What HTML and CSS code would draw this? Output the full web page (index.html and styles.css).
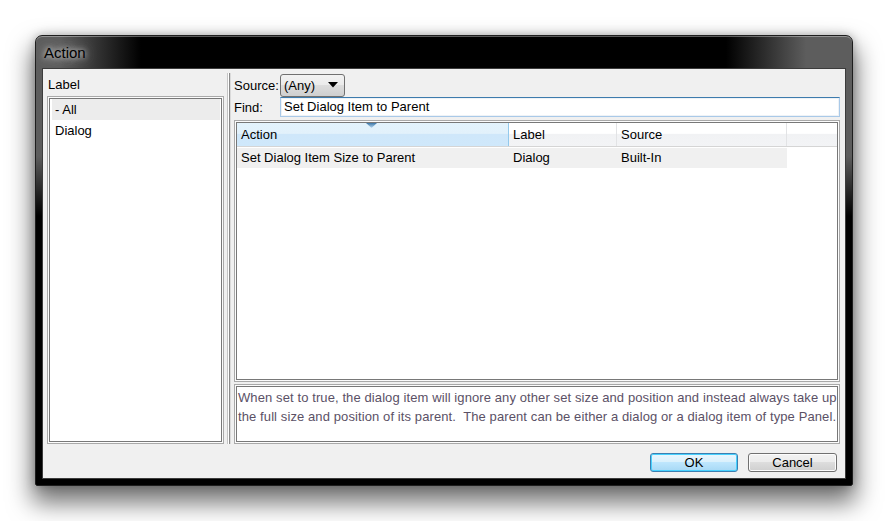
FILE: index.html
```html
<!DOCTYPE html>
<html>
<head>
<meta charset="utf-8">
<link rel="stylesheet" href="styles.css">
</head>
<body>
<div class="stage">
  <div class="window">
    <div class="titlebar"><span class="title">Action</span></div>
    <div class="content">
      <div class="main">
        <div class="left">
          <div class="head">Label</div>
          <div class="sunken list">
            <div class="inner">
              <div class="item sel">- All</div>
              <div class="item">Dialog</div>
            </div>
          </div>
        </div>
        <div class="splitter"></div>
        <div class="right">
          <div class="row row-source">
            <span class="lbl">Source:</span>
            <div class="combo"><span>(Any)</span>
              <svg class="arrow" width="10" height="6" viewBox="0 0 10 6"><path d="M0 0H10L5 5.5Z" fill="#000"/></svg>
            </div>
          </div>
          <div class="row row-find">
            <span class="lbl">Find:</span>
            <div class="input">Set Dialog Item to Parent</div>
          </div>
          <div class="sunken grid">
            <div class="inner">
              <div class="thead">
                <div class="th c1 sorted">Action
                  <svg class="sort" width="11" height="5" viewBox="0 0 11 5"><defs><linearGradient id="sg" x1="0" y1="0" x2="0" y2="1"><stop offset="0" stop-color="#3d78a9"/><stop offset="1" stop-color="#b9d9f2"/></linearGradient></defs><path d="M0 0H11L5.5 5Z" fill="url(#sg)"/></svg>
                </div>
                <div class="th c2">Label</div>
                <div class="th c3">Source</div>
                <div class="th c4"></div>
              </div>
              <div class="tr">
                <div class="td c1">Set Dialog Item Size to Parent</div>
                <div class="td c2">Dialog</div>
                <div class="td c3">Built-In</div>
              </div>
            </div>
          </div>
          <div class="sunken desc">
            <div class="inner">When set to true, the dialog item will ignore any other set size and position and instead always take up<br>the full size and position of its parent.&nbsp; The parent can be either a dialog or a dialog item of type Panel.</div>
          </div>
        </div>
      </div>
      <div class="footer">
        <div class="btn ok">OK</div>
        <div class="btn">Cancel</div>
      </div>
    </div>
  </div>
</div>
</body>
</html>
```
FILE: styles.css
```css
html, body {
  margin: 0;
  background: #fff;
}
body {
  font-family: "Liberation Sans", Arial, sans-serif;
  font-size: 13px;
  color: #000;
  height: 521px;
}
.stage {
  padding: 35px 0 0 35px;
}
.window {
  width: 818px;
  height: 451px;
  box-sizing: border-box;
  padding: 0 7px 7px 7px;
  border: 1px solid #1e1e1e;
  border-radius: 7px 7px 2px 2px;
  background:
    linear-gradient(to bottom, rgba(0,0,0,0) 0, rgba(0,0,0,0) 120px, #000 180px),
    linear-gradient(to right, #5d5d5d 0, #5d5d5d 25px, #000 105px, #000 690px, #5d5d5d 770px, #5d5d5d 100%);
  box-shadow: 0 14px 24px 3px rgba(0,0,0,0.55), 0 0 10px rgba(0,0,0,0.25), inset 0 1px 0 rgba(255,255,255,0.35);
  display: flex;
  flex-direction: column;
}
.titlebar {
  height: 33px;
  line-height: 33px;
  margin-left: -7px;
}
.title {
  display: inline-block;
  padding-left: 8px;
  font-size: 15px;
  color: #000;
  text-shadow: 0 0 5px rgba(210,210,210,1), 0 0 10px rgba(190,190,190,0.9), 0 0 16px rgba(170,170,170,0.8);
}
.content {
  height: 409px;
  box-sizing: border-box;
  background: #f0f0f0;
  padding: 4px 5px 0 4px;
  box-shadow: 0 0 0 1px #3c3c3c;
  display: flex;
  flex-direction: column;
}
.main {
  height: 371px;
  display: flex;
}
.left {
  width: 177px;
  flex: none;
  display: flex;
  flex-direction: column;
}
.head {
  height: 23px;
  line-height: 23px;
  padding-left: 1px;
}
.sunken {
  box-sizing: border-box;
  border: 1px solid #a9a9a9;
  padding: 1px;
  background: #fcfcfc;
}
.sunken > .inner {
  box-sizing: border-box;
  height: 100%;
  border: 1px solid #787878;
  background: #fff;
}
.list {
  height: 348px;
}
.list .inner {
  padding: 0 1px 0 2px;
}
.item {
  height: 21px;
  line-height: 21px;
  padding-left: 3px;
}
.item.sel {
  background: #ececec;
}
.splitter {
  width: 9px;
  flex: none;
  background: linear-gradient(to right, transparent 3px, #c4c4c4 3px, #c4c4c4 4px, #fff 4px, #fff 5px, #8a8a8a 5px, #8a8a8a 6px, #dadada 6px, #dadada 7px, transparent 7px);
}
.right {
  width: 607px;
  flex: none;
  padding-left: 1px;
  box-sizing: border-box;
  display: flex;
  flex-direction: column;
}
.row {
  display: flex;
  align-items: center;
}
.lbl {
  width: 46px;
  flex: none;
}
.row-source {
  height: 24px;
}
.combo {
  box-sizing: border-box;
  width: 65px;
  height: 23px;
  border: 1px solid #707070;
  border-radius: 3px;
  background: linear-gradient(to bottom, #f2f2f2 0, #ebebeb 50%, #dddddd 50%, #cfcfcf 100%);
  display: flex;
  align-items: center;
  padding-left: 3px;
}
.combo .arrow {
  margin-left: 13px;
}
.row-find {
  height: 23px;
  align-items: flex-start;
}
.row-find .lbl {
  line-height: 22px;
}
.input {
  box-sizing: border-box;
  flex: 1;
  height: 20px;
  line-height: 18px;
  border: 1px solid #a9c9e8;
  border-top-color: #3d7bad;
  padding-left: 3px;
  background: #fff;
  box-shadow: inset 0 0 0 1px #eef2f6;
}
.grid {
  height: 262px;
}
.thead {
  height: 23px;
  display: flex;
  border-bottom: 1px solid #d5d5d5;
  background: linear-gradient(to bottom, #ffffff 0, #ffffff 45%, #f1f2f4 50%, #f3f4f6 100%);
}
.th {
  box-sizing: border-box;
  line-height: 23px;
  padding-left: 4px;
  border-right: 1px solid #e2e3e5;
  position: relative;
}
.th.sorted {
  background: linear-gradient(to bottom, #e3f3fc 0, #e2f1fb 45%, #cfe7fa 50%, #cfe8fb 100%);
  border-right: 1px solid #93c9ec;
}
.sort {
  position: absolute;
  left: 129px;
  top: 0;
}
.c1 { width: 272px; }
.c2 { width: 108px; }
.c3 { width: 170px; }
.c4 { flex: 1; border-right: none; }
.tr {
  display: flex;
  height: 20px;
  margin-top: 1px;
}
.td {
  box-sizing: border-box;
  line-height: 20px;
  padding-left: 4px;
  background: #f0f0f0;
}
.desc {
  height: 60px;
  margin-top: 2px;
}
.desc .inner {
  padding: 1px 1px;
  line-height: 19px;
  color: #5b5166;
  letter-spacing: 0.1px;
  white-space: nowrap;
  overflow: hidden;
}
.footer {
  height: 34px;
  box-sizing: border-box;
  padding: 9px 3px 0 0;
  display: flex;
  justify-content: flex-end;
  gap: 10px;
}
.btn {
  box-sizing: border-box;
  width: 89px;
  height: 19px;
  line-height: 17px;
  text-align: center;
  border: 1px solid #707070;
  border-radius: 3px;
  background: linear-gradient(to bottom, #f2f2f2 0, #ebebeb 50%, #dddddd 50%, #cfcfcf 100%);
  box-shadow: inset 0 0 0 1px #fcfcfc;
}
.btn.ok {
  width: 88px;
  border-color: #3c7fb1;
  background: linear-gradient(to bottom, #eaf6fd 0, #d9f0fc 50%, #bee6fd 50%, #a7d9f5 100%);
  box-shadow: inset 0 0 0 1px #48d1fe;
}
```
